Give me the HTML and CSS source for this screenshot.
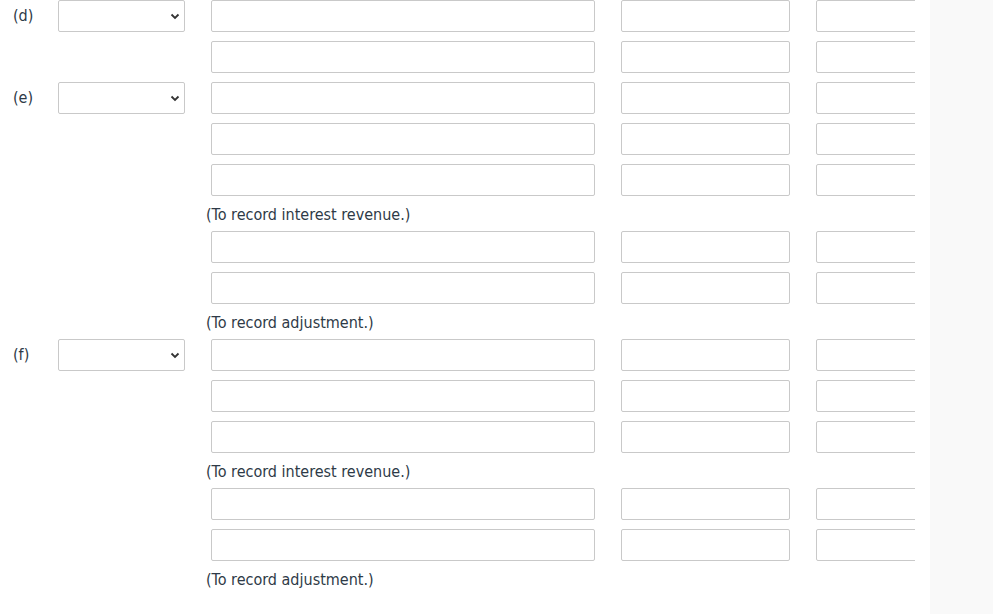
FILE: index.html
```html
<!DOCTYPE html>
<html>
<head>
<meta charset="utf-8">
<link rel="stylesheet" href="styles.css">
</head>
<body>
<div class="page">
  <main class="sheet">
    <div class="row">
      <span class="lbl">(d)</span>
      <div class="sel"><svg class="chev" width="10" height="7" viewBox="0 0 10 7"><path d="M1.5 1.5 L5 5 L8.5 1.5" fill="none" stroke="#333" stroke-width="1.8"/></svg></div>
      <span></span><span class="box acct"></span><span></span><span class="box amt"></span><span></span><span class="box amt"></span>
    </div>
    <div class="row">
      <span></span><span></span>
      <span></span><span class="box acct"></span><span></span><span class="box amt"></span><span></span><span class="box amt"></span>
    </div>
    <div class="row">
      <span class="lbl">(e)</span>
      <div class="sel"><svg class="chev" width="10" height="7" viewBox="0 0 10 7"><path d="M1.5 1.5 L5 5 L8.5 1.5" fill="none" stroke="#333" stroke-width="1.8"/></svg></div>
      <span></span><span class="box acct"></span><span></span><span class="box amt"></span><span></span><span class="box amt"></span>
    </div>
    <div class="row">
      <span></span><span></span>
      <span></span><span class="box acct"></span><span></span><span class="box amt"></span><span></span><span class="box amt"></span>
    </div>
    <div class="row">
      <span></span><span></span>
      <span></span><span class="box acct"></span><span></span><span class="box amt"></span><span></span><span class="box amt"></span>
    </div>
    <div class="note">(To record interest revenue.)</div>
    <div class="row">
      <span></span><span></span>
      <span></span><span class="box acct"></span><span></span><span class="box amt"></span><span></span><span class="box amt"></span>
    </div>
    <div class="row">
      <span></span><span></span>
      <span></span><span class="box acct"></span><span></span><span class="box amt"></span><span></span><span class="box amt"></span>
    </div>
    <div class="note">(To record adjustment.)</div>
    <div class="row">
      <span class="lbl">(f)</span>
      <div class="sel"><svg class="chev" width="10" height="7" viewBox="0 0 10 7"><path d="M1.5 1.5 L5 5 L8.5 1.5" fill="none" stroke="#333" stroke-width="1.8"/></svg></div>
      <span></span><span class="box acct"></span><span></span><span class="box amt"></span><span></span><span class="box amt"></span>
    </div>
    <div class="row">
      <span></span><span></span>
      <span></span><span class="box acct"></span><span></span><span class="box amt"></span><span></span><span class="box amt"></span>
    </div>
    <div class="row">
      <span></span><span></span>
      <span></span><span class="box acct"></span><span></span><span class="box amt"></span><span></span><span class="box amt"></span>
    </div>
    <div class="note">(To record interest revenue.)</div>
    <div class="row">
      <span></span><span></span>
      <span></span><span class="box acct"></span><span></span><span class="box amt"></span><span></span><span class="box amt"></span>
    </div>
    <div class="row">
      <span></span><span></span>
      <span></span><span class="box acct"></span><span></span><span class="box amt"></span><span></span><span class="box amt"></span>
    </div>
    <div class="note">(To record adjustment.)</div>
  </main>
  <aside class="side"></aside>
</div>
</body>
</html>
```
FILE: styles.css
```css
html, body {
  margin: 0;
  padding: 0;
  background: #ffffff;
}
body {
  font-family: "DejaVu Sans Condensed", "DejaVu Sans", Verdana, sans-serif;
  font-size: 16px;
  color: #2e3a47;
}
.page {
  display: flex;
  width: 993px;
  height: 614px;
  overflow: hidden;
}
.sheet {
  width: 915px;
  overflow: hidden;
  flex: none;
}
.side {
  margin-left: 15px;
  flex: 1;
  background: #f9f9f9;
}
.row {
  display: grid;
  grid-template-columns: 58px 127px 26px 384px 26px 169px 26px 169px;
  height: 32px;
  margin-bottom: 9px;
  align-items: center;
}
.row + .note { margin-top: -9px; }
.lbl {
  padding-left: 13px;
  line-height: 32px;
}
.box, .sel {
  box-sizing: border-box;
  height: 32px;
  border: 1px solid #c9c9c9;
  border-radius: 2px;
  background: #fff;
}
.sel {
  position: relative;
}
.chev {
  position: absolute;
  right: 4px;
  top: 12px;
}
.note {
  height: 35px;
  line-height: 37px;
  padding-left: 206px;
}
```
